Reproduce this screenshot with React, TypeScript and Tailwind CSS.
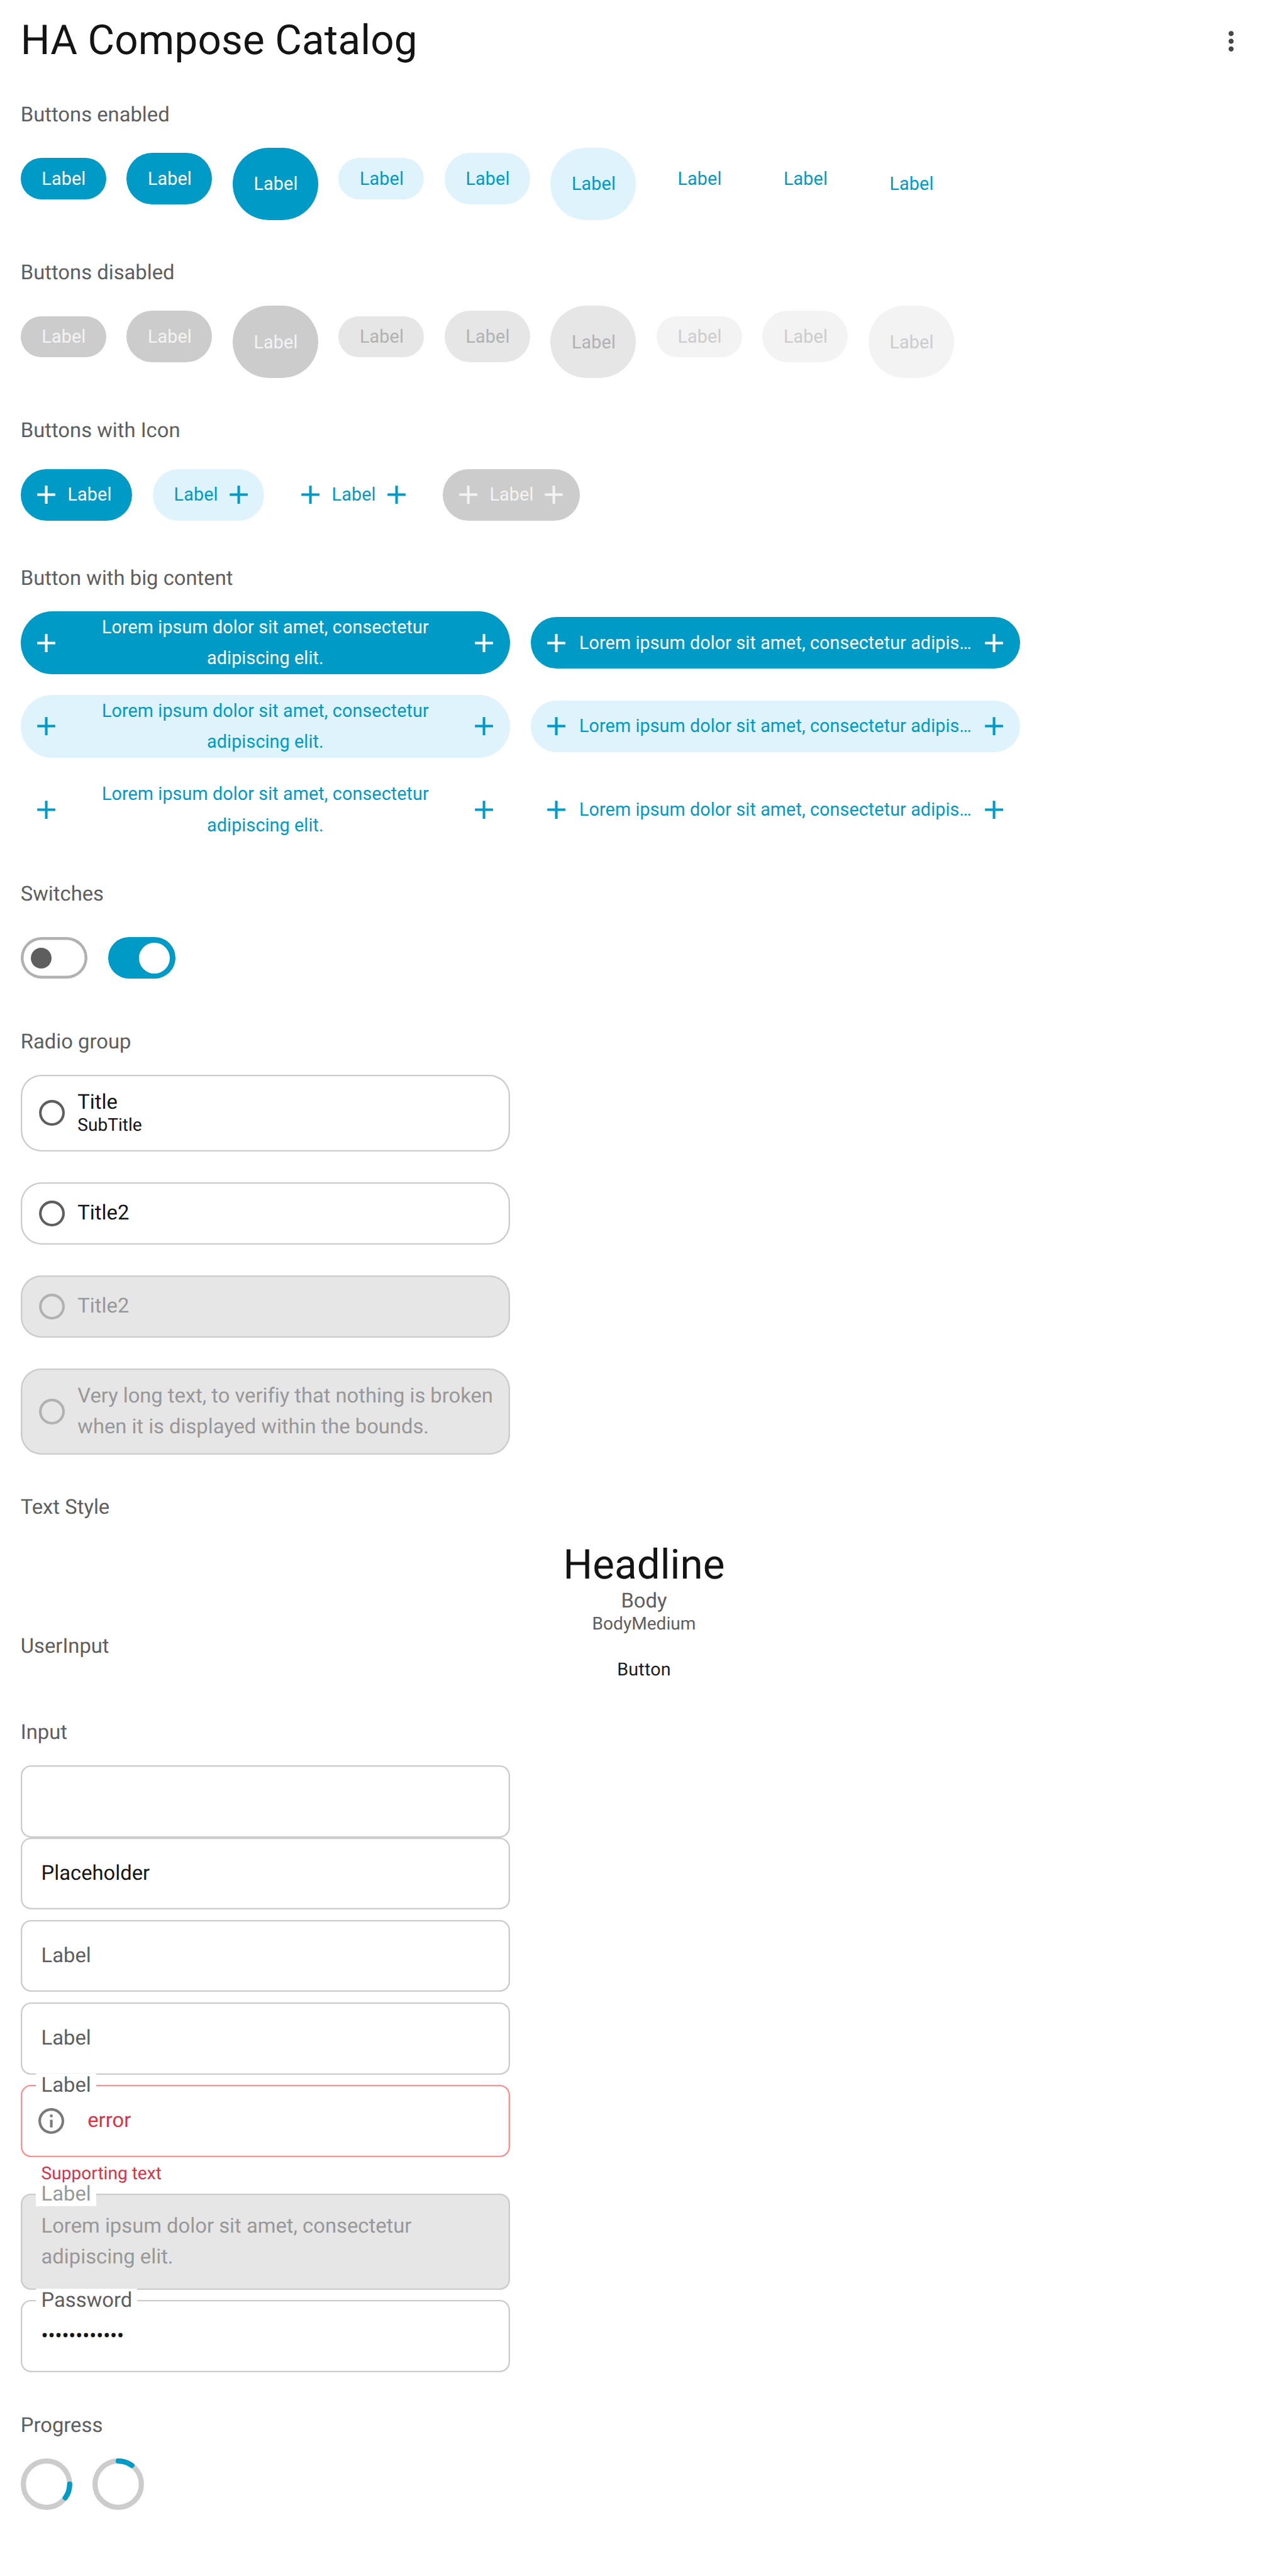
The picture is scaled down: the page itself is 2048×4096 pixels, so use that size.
import type { ReactNode } from "react";

type Tone = "filled" | "tonal" | "plain" | "filledOff" | "tonalOff" | "plainOff";

const tones: Record<Tone, string> = {
  filled: "bg-[#009ac7] text-white",
  tonal: "bg-[#dff3fc] text-[#009ac7]",
  plain: "text-[#009ac7]",
  filledOff: "bg-[#cccccc] text-[#f3f3f3]",
  tonalOff: "bg-[#e6e6e6] text-[#b1b1b1]",
  plainOff: "bg-[#f3f3f3] text-[#cccccc]",
};

const sizes = {
  s: "mt-[16.38px] h-[65.54px]",
  m: "mt-[8.19px] h-[81.92px]",
  l: "h-[114.69px]",
};

function Plus() {
  return (
    <svg viewBox="0 0 24 24" className="size-[49.15px] shrink-0" fill="currentColor">
      <path d="M19 13h-6v6h-2v-6H5v-2h6V5h2v6h6z" />
    </svg>
  );
}

function LabelButton({ tone, size }: { tone: Tone; size: keyof typeof sizes }) {
  return (
    <button
      className={`flex w-[135.76px] items-center justify-center rounded-full pt-[1px] pl-[1.6px] text-[28.67px] tracking-[0.17px] ${sizes[size]} ${tones[tone]}`}
    >
      Label
    </button>
  );
}

function IconButton({ tone, left, right }: { tone: Tone; left?: boolean; right?: boolean }) {
  return (
    <button
      className={`flex h-[81.92px] items-center gap-[8.19px] rounded-full text-[28.67px] tracking-[0.17px] ${tones[tone]} ${left ? "pl-[16.38px]" : "pl-[32.77px]"} ${right ? "pr-[16.38px]" : "pr-[32.77px]"}`}
    >
      {left && <Plus />}
      <span className="w-[70.8px] pl-[1px] text-center whitespace-nowrap">Label</span>
      {right && <Plus />}
    </button>
  );
}

function BigButton({ tone, single }: { tone: Tone; single?: boolean }) {
  return (
    <button
      className={`flex w-[778.24px] items-center rounded-full px-[16.38px] text-[28.67px] leading-[49.15px] tracking-[0.125px] ${single ? "h-[81.92px]" : "h-[99.86px]"} ${tones[tone]}`}
    >
      <Plus />
      <span className="flex-1 text-center whitespace-nowrap">
        {single ? (
          "Lorem ipsum dolor sit amet, consectetur adipis…"
        ) : (
          <>
            Lorem ipsum dolor sit amet, consectetur
            <br />
            adipiscing elit.
          </>
        )}
      </span>
      <Plus />
    </button>
  );
}

function Heading({ children }: { children: ReactNode }) {
  return <h2 className="h-[38.3px] text-left text-[32.77px] leading-[39.5px] text-[#5e5e5e]">{children}</h2>;
}

function Section({ title, children }: { title: string; children: ReactNode }) {
  return (
    <section className="flex flex-col gap-[32.77px]">
      <Heading>{title}</Heading>
      {children}
    </section>
  );
}

function RadioCard({ height, disabled, children }: { height: string; disabled?: boolean; children: ReactNode }) {
  return (
    <div
      className={`flex w-[778.24px] items-center gap-[16.6px] rounded-[32.77px] pl-[24.8px] text-[32.77px] shadow-[inset_0_0_0_2.34px_#cccccc] ${height} ${disabled ? "bg-[#e6e6e6] text-[#989898]" : "text-[#141414]"}`}
    >
      <svg viewBox="0 0 24 24" className="size-[49.15px] shrink-0" fill="none" strokeWidth="2">
        <circle cx="12" cy="12" r="9" stroke={disabled ? "#b1b1b1" : "#5e5e5e"} />
      </svg>
      <div className="whitespace-nowrap">{children}</div>
    </div>
  );
}

const outline = "shadow-[inset_0_0_0_2.34px_#cccccc]";

function Field({
  label,
  tone = "",
  height = "h-[114.69px]",
  children,
}: {
  label?: ReactNode;
  tone?: string;
  height?: string;
  children?: ReactNode;
}) {
  return (
    <div
      className={`relative flex w-[778.24px] items-center rounded-[16.38px] pl-[32.77px] text-[32.77px] leading-[49.15px] ${height} ${tone}`}
    >
      {label && (
        <span className="absolute top-[-18.1px] left-[24.58px] bg-white px-[8.19px] leading-[38.3px]">{label}</span>
      )}
      {children && <div className="flex items-center pt-[1.6px]">{children}</div>}
    </div>
  );
}

function Spinner({ arc }: { arc: string }) {
  return (
    <svg viewBox="0 0 40 40" className="size-[81.92px]" fill="none" strokeWidth="4">
      <circle cx="20" cy="20" r="18" stroke="#cccccc" />
      <path d={arc} stroke="#009ac7" strokeLinecap="round" />
    </svg>
  );
}

const buttonSizes = ["s", "m", "l"] as const;

export default function App() {
  return (
    <div className="h-[4096px] w-[2048px] overflow-hidden bg-white font-[Roboto,sans-serif] [text-rendering:geometricPrecision]">
      <header className="flex h-[131.07px] items-center justify-between pr-[65.54px] pl-[32.77px]">
        <h1 className="text-[65.54px] tracking-[0.15px] text-[#141414]">HA Compose Catalog</h1>
        <svg viewBox="0 0 24 24" className="size-[49.15px]" fill="#46464a">
          <path d="M12 8c1.1 0 2-.9 2-2s-.9-2-2-2-2 .9-2 2 .9 2 2 2zm0 2c-1.1 0-2 .9-2 2s.9 2 2 2 2-.9 2-2-.9-2-2-2zm0 6c-1.1 0-2 .9-2 2s.9 2 2 2 2-.9 2-2-.9-2-2-2z" />
        </svg>
      </header>

      <main className="flex flex-col gap-[65.54px] px-[32.77px] pt-[32.77px]">
        <Section title="Buttons enabled">
          <div className="flex items-start gap-[32.77px]">
            {(["filled", "tonal", "plain"] as const).map((tone) =>
              buttonSizes.map((size) => <LabelButton key={tone + size} tone={tone} size={size} />),
            )}
          </div>
        </Section>

        <Section title="Buttons disabled">
          <div className="flex items-start gap-[32.77px]">
            {(["filledOff", "tonalOff", "plainOff"] as const).map((tone) =>
              buttonSizes.map((size) => <LabelButton key={tone + size} tone={tone} size={size} />),
            )}
          </div>
        </Section>

        <Section title="Buttons with Icon">
          <div className="flex h-[98.3px] items-center gap-[32.77px]">
            <IconButton tone="filled" left />
            <IconButton tone="tonal" right />
            <IconButton tone="plain" left right />
            <IconButton tone="filledOff" left right />
          </div>
        </Section>

        <Section title="Button with big content">
          <div className="flex flex-col gap-[32.77px]">
            {(["filled", "tonal", "plain"] as const).map((tone) => (
              <div key={tone} className="flex items-center gap-[32.77px]">
                <BigButton tone={tone} />
                <BigButton tone={tone} single />
              </div>
            ))}
          </div>
        </Section>

        <Section title="Switches">
          <div className="flex h-[98.3px] items-center gap-[32.77px]">
            <div className="flex h-[65.54px] w-[106.5px] items-center rounded-full pl-[16.38px] shadow-[inset_0_0_0_4.5px_#b1b1b1]">
              <span className="size-[32.77px] rounded-full bg-[#5e5e5e]" />
            </div>
            <div className="flex h-[65.54px] w-[106.5px] items-center justify-end rounded-full bg-[#009ac7] pr-[8.19px]">
              <span className="size-[49.15px] rounded-full bg-white" />
            </div>
          </div>
        </Section>

        <Section title="Radio group">
          <div className="flex flex-col gap-[49.15px]">
            <RadioCard height="h-[121.7px]">
              <div className="leading-[38.3px]">Title</div>
              <div className="text-[28.09px] leading-[33.55px]">SubTitle</div>
            </RadioCard>
            <RadioCard height="h-[98.8px]">
              <div className="pt-[1.2px]">Title2</div>
            </RadioCard>
            <RadioCard height="h-[98.8px]" disabled>
              <div className="pt-[1.2px]">Title2</div>
            </RadioCard>
            <RadioCard height="h-[137.3px]" disabled>
              <div className="pt-[1.6px] leading-[49.15px] tracking-[-0.03px] [font-variant-ligatures:common-ligatures]">
                Very long text, to verifiy that nothing is broken
                <br />
                when it is displayed within the bounds.
              </div>
            </RadioCard>
          </div>
        </Section>

        <Section title="Text Style">
          <div className="flex flex-col text-center text-[#5e5e5e]">
            <div className="text-[65.54px] leading-[77.2px] text-[#141414]">Headline</div>
            <div className="h-[38.3px] text-[32.77px] leading-[39.5px]">Body</div>
            <div className="h-[33.55px] text-[28.09px] leading-[34.6px]">BodyMedium</div>
            <Heading>UserInput</Heading>
            <div className="h-[33.55px] text-[28.67px] leading-[34.6px] tracking-[0.205px] text-[#1a1c1e]">
              Button
            </div>
          </div>
        </Section>

        <Section title="Input">
          <div className="flex flex-col">
            <Field tone={outline} />
            <Field tone={`${outline} text-[#141414]`}>Placeholder</Field>
            <div className="flex flex-col gap-[16.38px] pt-[16.38px]">
              <Field tone={`${outline} text-[#5e5e5e]`}>Label</Field>
              <Field tone={`${outline} text-[#5e5e5e]`}>Label</Field>
              <div>
                <Field
                  tone="shadow-[inset_0_0_0_2.34px_#fd8f90] text-[#dc3146]"
                  label={<span className="text-[#5e5e5e]">Label</span>}
                >
                  <svg viewBox="0 0 24 24" className="-ml-[8.19px] mr-[32.77px] size-[49.15px]" fill="#7a7a7a">
                    <path d="M11 7h2v2h-2zm0 4h2v6h-2zm1-9C6.48 2 2 6.48 2 12s4.48 10 10 10 10-4.48 10-10S17.52 2 12 2zm0 18c-4.41 0-8-3.59-8-8s3.59-8 8-8 8 3.59 8 8-3.59 8-8 8z" />
                  </svg>
                  error
                </Field>
                <div className="h-[42.19px] pt-[8.19px] pl-[32.77px] text-[28.09px] leading-[35.6px] text-[#dc3146]">
                  Supporting text
                </div>
              </div>
              <Field tone={`${outline} bg-[#e6e6e6] text-[#989898]`} height="h-[152.9px]" label="Label">
                <span>
                  Lorem ipsum dolor sit amet, consectetur
                  <br />
                  adipiscing elit.
                </span>
              </Field>
              <Field tone={`${outline} text-[#141414]`} label={<span className="text-[#5e5e5e]">Password</span>}>
                <span className="tracking-[-0.1px]">••••••••••••</span>
              </Field>
            </div>
          </div>
        </Section>

        <Section title="Progress">
          <div className="flex gap-[32.77px]">
            <Spinner arc="M38 20A18 18 0 0 1 34.56 30.58" />
            <Spinner arc="M20 2A18 18 0 0 1 30.58 5.44" />
          </div>
        </Section>
      </main>
    </div>
  );
}
